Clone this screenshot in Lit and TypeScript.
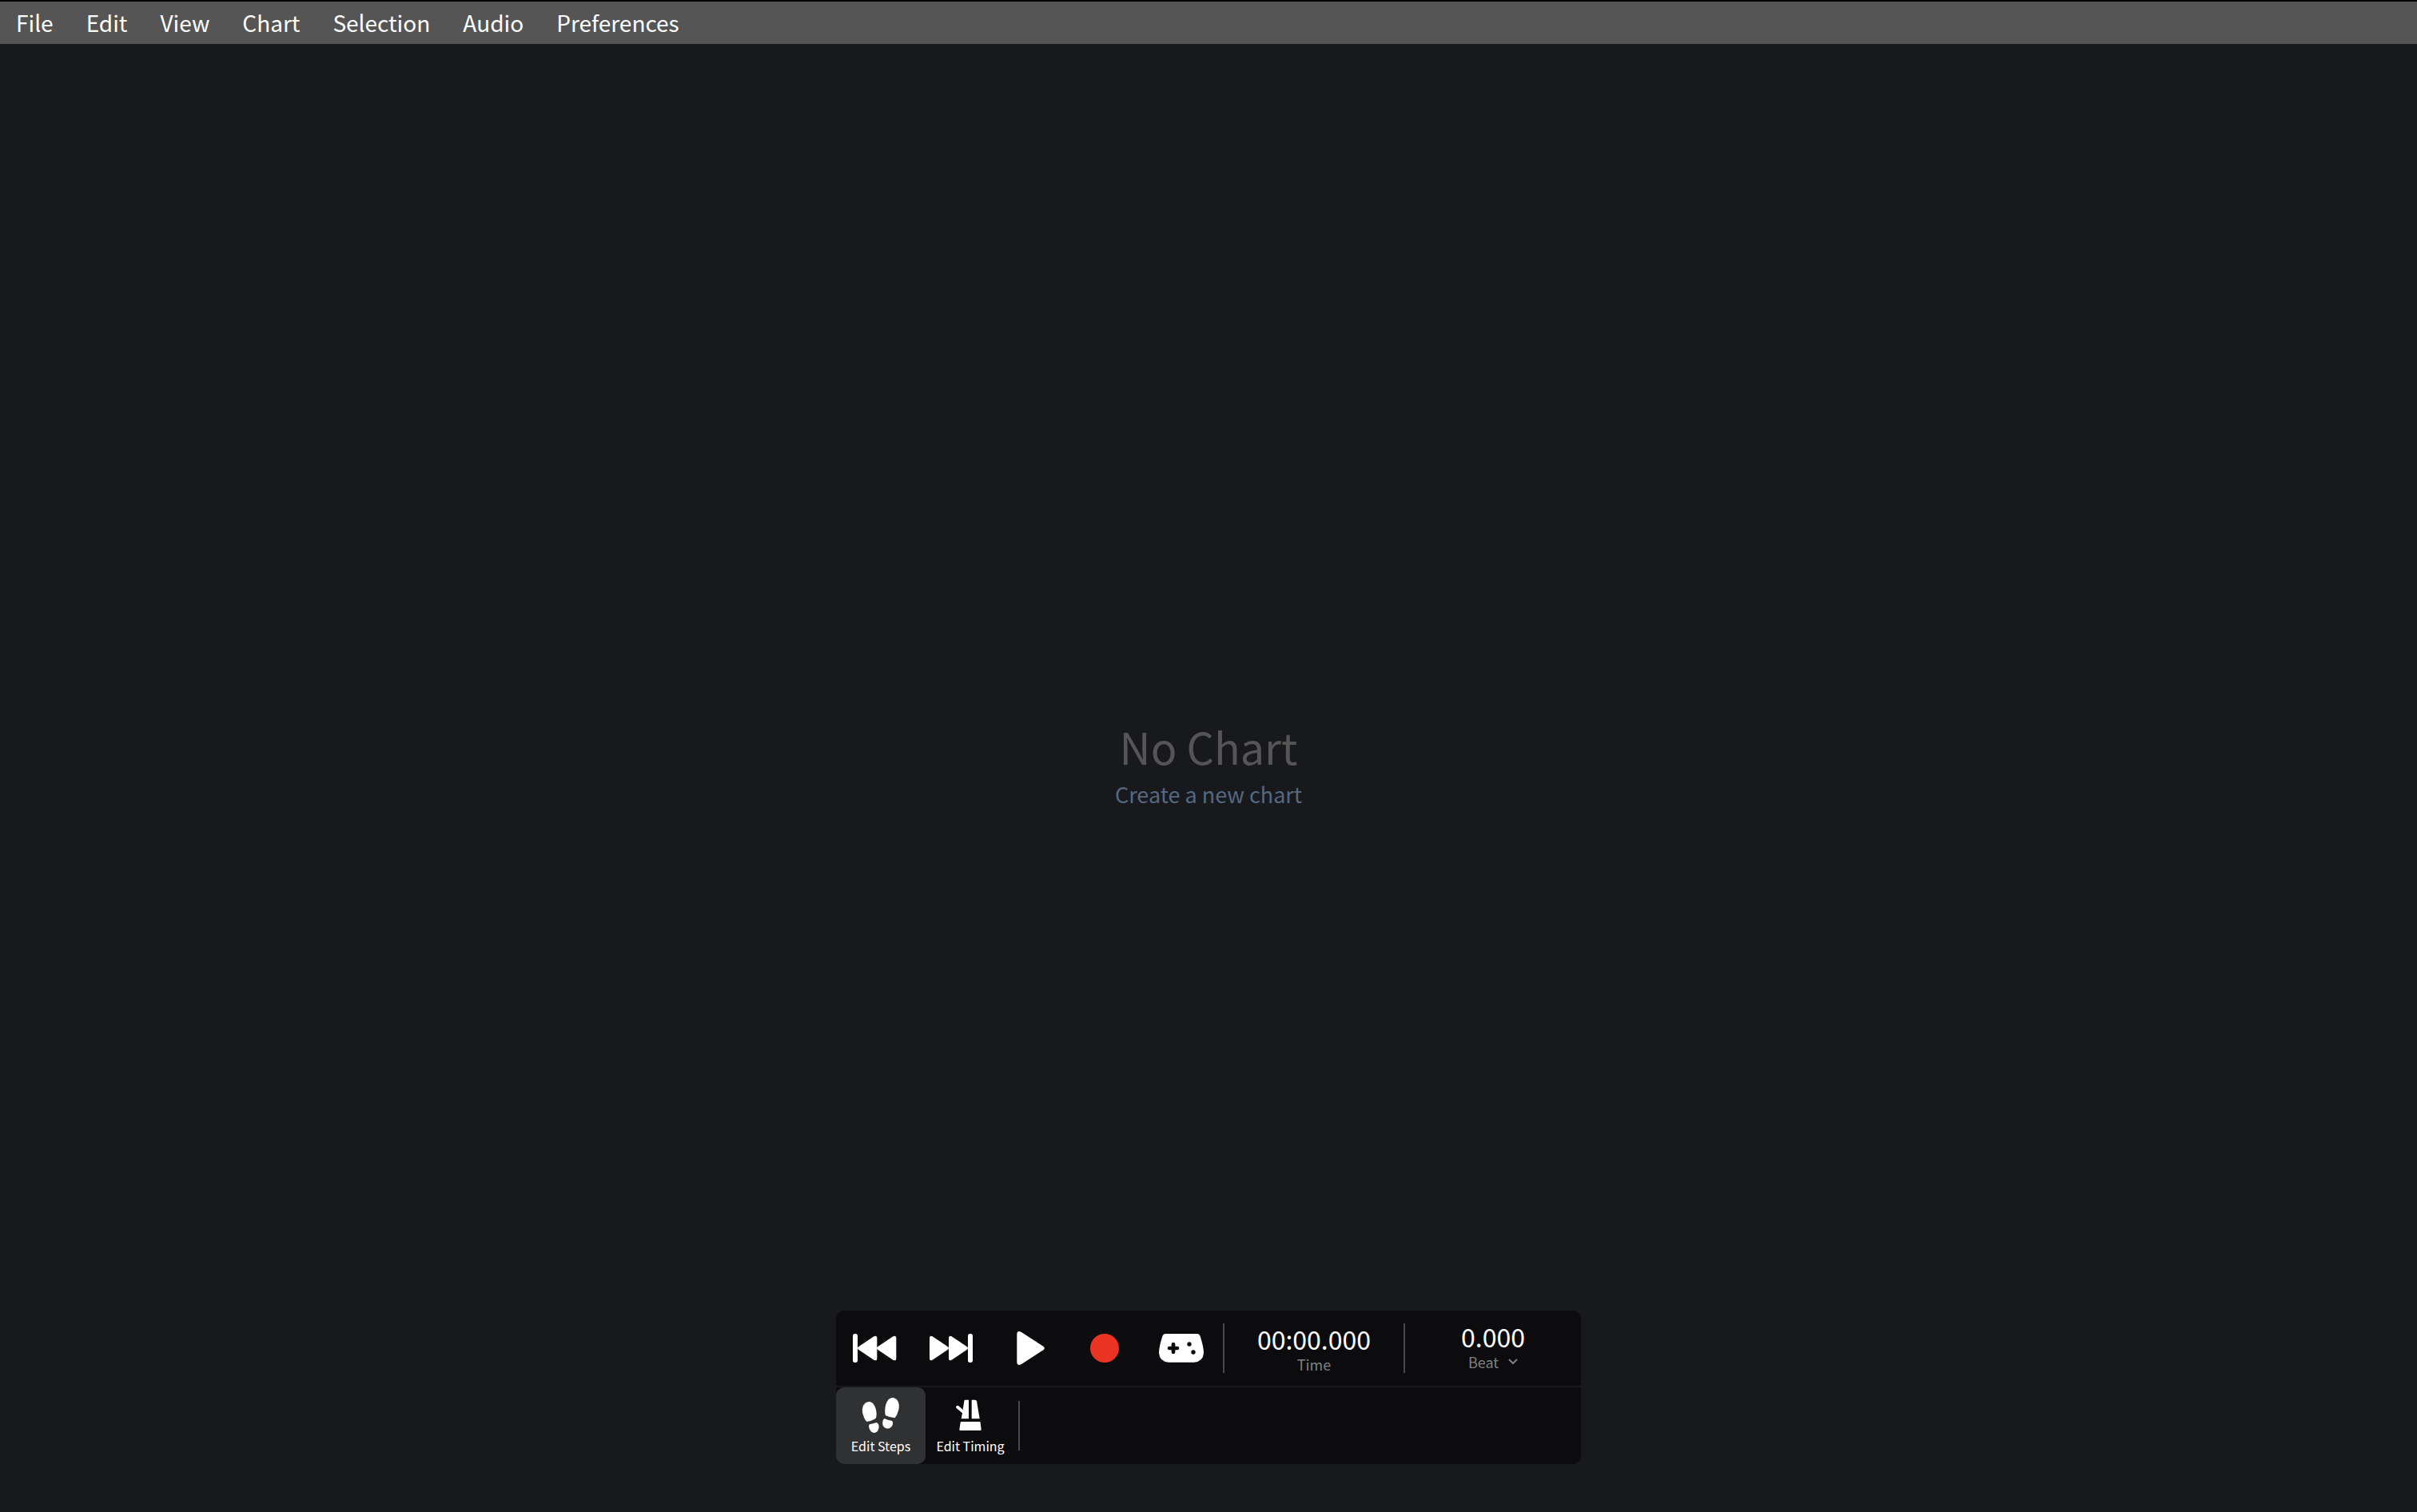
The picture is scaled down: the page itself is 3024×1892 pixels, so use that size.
import { LitElement, html, css, svg } from "lit";
import { customElement, state } from "lit/decorators.js";

const MENUS = ["File", "Edit", "View", "Chart", "Selection", "Audio", "Preferences"];

const TRANSPORT = [
  {
    label: "Skip to start",
    icon: svg`<rect x="9" y="18" width="18" height="108" rx="8"/>
      <path d="M31 66 88 28Q100 22 100 34V110Q100 122 88 116L31 78Q23 72 31 66Z"/>
      <path d="M103 66 160 28Q172 22 172 34V110Q172 122 160 116L103 78Q95 72 103 66Z"/>`,
  },
  {
    label: "Skip to end",
    icon: svg`<rect x="153" y="18" width="18" height="108" rx="8"/>
      <path d="M77 66 20 28Q9 22 9 34V110Q9 122 20 116L77 78Q85 72 77 66Z"/>
      <path d="M149 66 92 28Q81 22 81 34V110Q81 122 92 116L149 78Q157 72 149 66Z"/>`,
  },
  {
    label: "Play",
    icon: svg`<path d="M66 12 148 65Q157 72 148 79L66 132Q49 140 49 124V20Q49 4 66 12Z"/>`,
  },
  {
    label: "Record",
    icon: svg`<circle cx="90" cy="72" r="54" fill="#eb3323"/>`,
  },
  {
    label: "Playtest",
    icon: svg`<path fill-rule="evenodd" d="M32 18H148Q158 18 161 28Q174 68 174 90Q172 122 138 125H42Q8 122 6 90Q6 68 19 28Q22 18 32 18Z
      M53 56V65H44Q38 66 38 72Q38 78 44 79H53V88Q54 94 60 94Q66 94 67 88V79H76Q82 78 82 72Q82 66 76 65H67V56Q66 50 60 50Q54 50 53 56Z
      M112 57A8 8 0 1 0 128 57A8 8 0 1 0 112 57Z
      M127 87A8 8 0 1 0 143 87A8 8 0 1 0 127 87Z"/>`,
  },
];

const MODES = [
  {
    label: "Edit Steps",
    icon: svg`<path d="M45 24C63 24 73 46 74 70Q74 83 70 88Q52 98 37 99Q28 90 22 68C17 46 26 26 45 24Z"/>
      <path d="M48 109Q62 106 74 102C83 106 84 116 82 124C79 144 57 146 49 130Q42 115 48 109Z"/>
      <path d="M137 9C155 12 162 34 157 54Q152 74 143 85Q126 84 108 76Q105 68 106 50C109 26 118 8 137 9Z"/>
      <path d="M103 87Q116 93 132 96C139 102 134 115 128 120C116 130 100 122 97 110Q95 92 103 87Z"/>`,
  },
  {
    label: "Edit Timing",
    icon: svg`<path d="M71 17H84V88H56L60 67L37 47Q34 37 45 39L62 54L67 21Q68 17 71 17Z"/>
      <path d="M95 17H108Q113 17 114 22L125 88H95Z"/>
      <path d="M56 99H124Q127 99 128 102L131 128Q131 132 127 132H53Q49 132 49 128L53 102Q53 99 56 99Z"/>`,
  },
];

@customElement("app-root")
export class AppRoot extends LitElement {
  @state() private mode = "Edit Steps";

  static styles = css`
    :host {
      display: flex;
      flex-direction: column;
      min-height: 100vh;
      box-sizing: border-box;
      background: #18191c;
      color: #fff;
      font-family: "Noto Sans CJK JP", "Noto Sans", sans-serif;
    }
    button {
      margin: 0;
      padding: 0;
      border: 0;
      background: none;
      color: inherit;
      font: inherit;
      cursor: pointer;
    }
    .menubar {
      display: flex;
      gap: 1px;
      border-top: 2px solid #000;
      background: #555;
    }
    .menu {
      padding: 0 20px;
      font-size: 28px;
      line-height: 53px;
    }
    .stage {
      flex: 1;
      display: flex;
      flex-direction: column;
      align-items: center;
      justify-content: center;
      padding-top: 228px;
    }
    .title {
      margin: 0;
      font-size: 54px;
      font-weight: 400;
      line-height: 64px;
      color: #555;
    }
    .create {
      font-size: 27px;
      line-height: 56px;
      color: #566880;
      text-decoration: none;
    }
    .panel {
      align-self: center;
      margin-bottom: 60px;
      width: 932px;
      max-width: 100%;
      border-radius: 10px;
      background: #0c0c0e;
    }
    .row {
      display: flex;
      align-items: center;
      height: 96px;
      box-sizing: border-box;
    }
    .transport {
      border-bottom: 2px solid #18191b;
    }
    .control {
      width: 96px;
      height: 94px;
      display: grid;
      place-items: center;
    }
    .icon {
      display: block;
      width: 60px;
      height: 48px;
      fill: #fff;
    }
    .divider {
      width: 2px;
      height: 62px;
      background: #48494b;
    }
    .transport .control + .divider,
    .modes .divider {
      margin-left: 4px;
    }
    .readout {
      display: flex;
      flex-direction: column;
      align-items: center;
    }
    .time {
      width: 224px;
      padding-top: 4px;
    }
    .beat {
      flex: 1;
      padding-bottom: 2px;
    }
    .value {
      font-size: 32px;
      line-height: 36px;
    }
    .unit {
      display: flex;
      align-items: center;
      gap: 12px;
      font-size: 18px;
      line-height: 28px;
      color: #808080;
    }
    .chevron {
      width: 12px;
      height: 8px;
      fill: none;
      stroke: #808080;
      stroke-width: 2;
    }
    .mode {
      width: 112px;
      height: 96px;
      padding-bottom: 8px;
      display: flex;
      flex-direction: column;
      align-items: center;
      justify-content: flex-end;
      border-radius: 10px;
      font-size: 16px;
      line-height: 30px;
    }
    .mode.active {
      background: #303133;
    }
  `;

  render() {
    return html`
      <nav class="menubar" aria-label="Main">
        ${MENUS.map((m) => html`<button class="menu" type="button">${m}</button>`)}
      </nav>
      <main class="stage">
        <h1 class="title">No Chart</h1>
        <a class="create" href="#new">Create a new chart</a>
      </main>
      <section class="panel" aria-label="Playback and tools">
        <div class="row transport">
          ${TRANSPORT.map(
            (t) => html`<button class="control" type="button" aria-label=${t.label}>
              <svg class="icon" viewBox="0 0 180 144" aria-hidden="true">${t.icon}</svg>
            </button>`
          )}
          <span class="divider"></span>
          <div class="readout time">
            <span class="value">00:00.000</span>
            <span class="unit">Time</span>
          </div>
          <span class="divider"></span>
          <div class="readout beat">
            <span class="value">0.000</span>
            <button class="unit" type="button">
              Beat
              <svg class="chevron" viewBox="0 0 12 8" aria-hidden="true"><path d="M1 1 6 6 11 1"/></svg>
            </button>
          </div>
        </div>
        <div class="row modes">
          ${MODES.map(
            (m) => html`<button
              class="mode ${this.mode === m.label ? "active" : ""}"
              type="button"
              aria-pressed=${this.mode === m.label ? "true" : "false"}
              @click=${() => (this.mode = m.label)}
            >
              <svg class="icon" viewBox="0 0 180 144" aria-hidden="true">${m.icon}</svg>
              ${m.label}
            </button>`
          )}
          <span class="divider"></span>
        </div>
      </section>
    `;
  }
}
